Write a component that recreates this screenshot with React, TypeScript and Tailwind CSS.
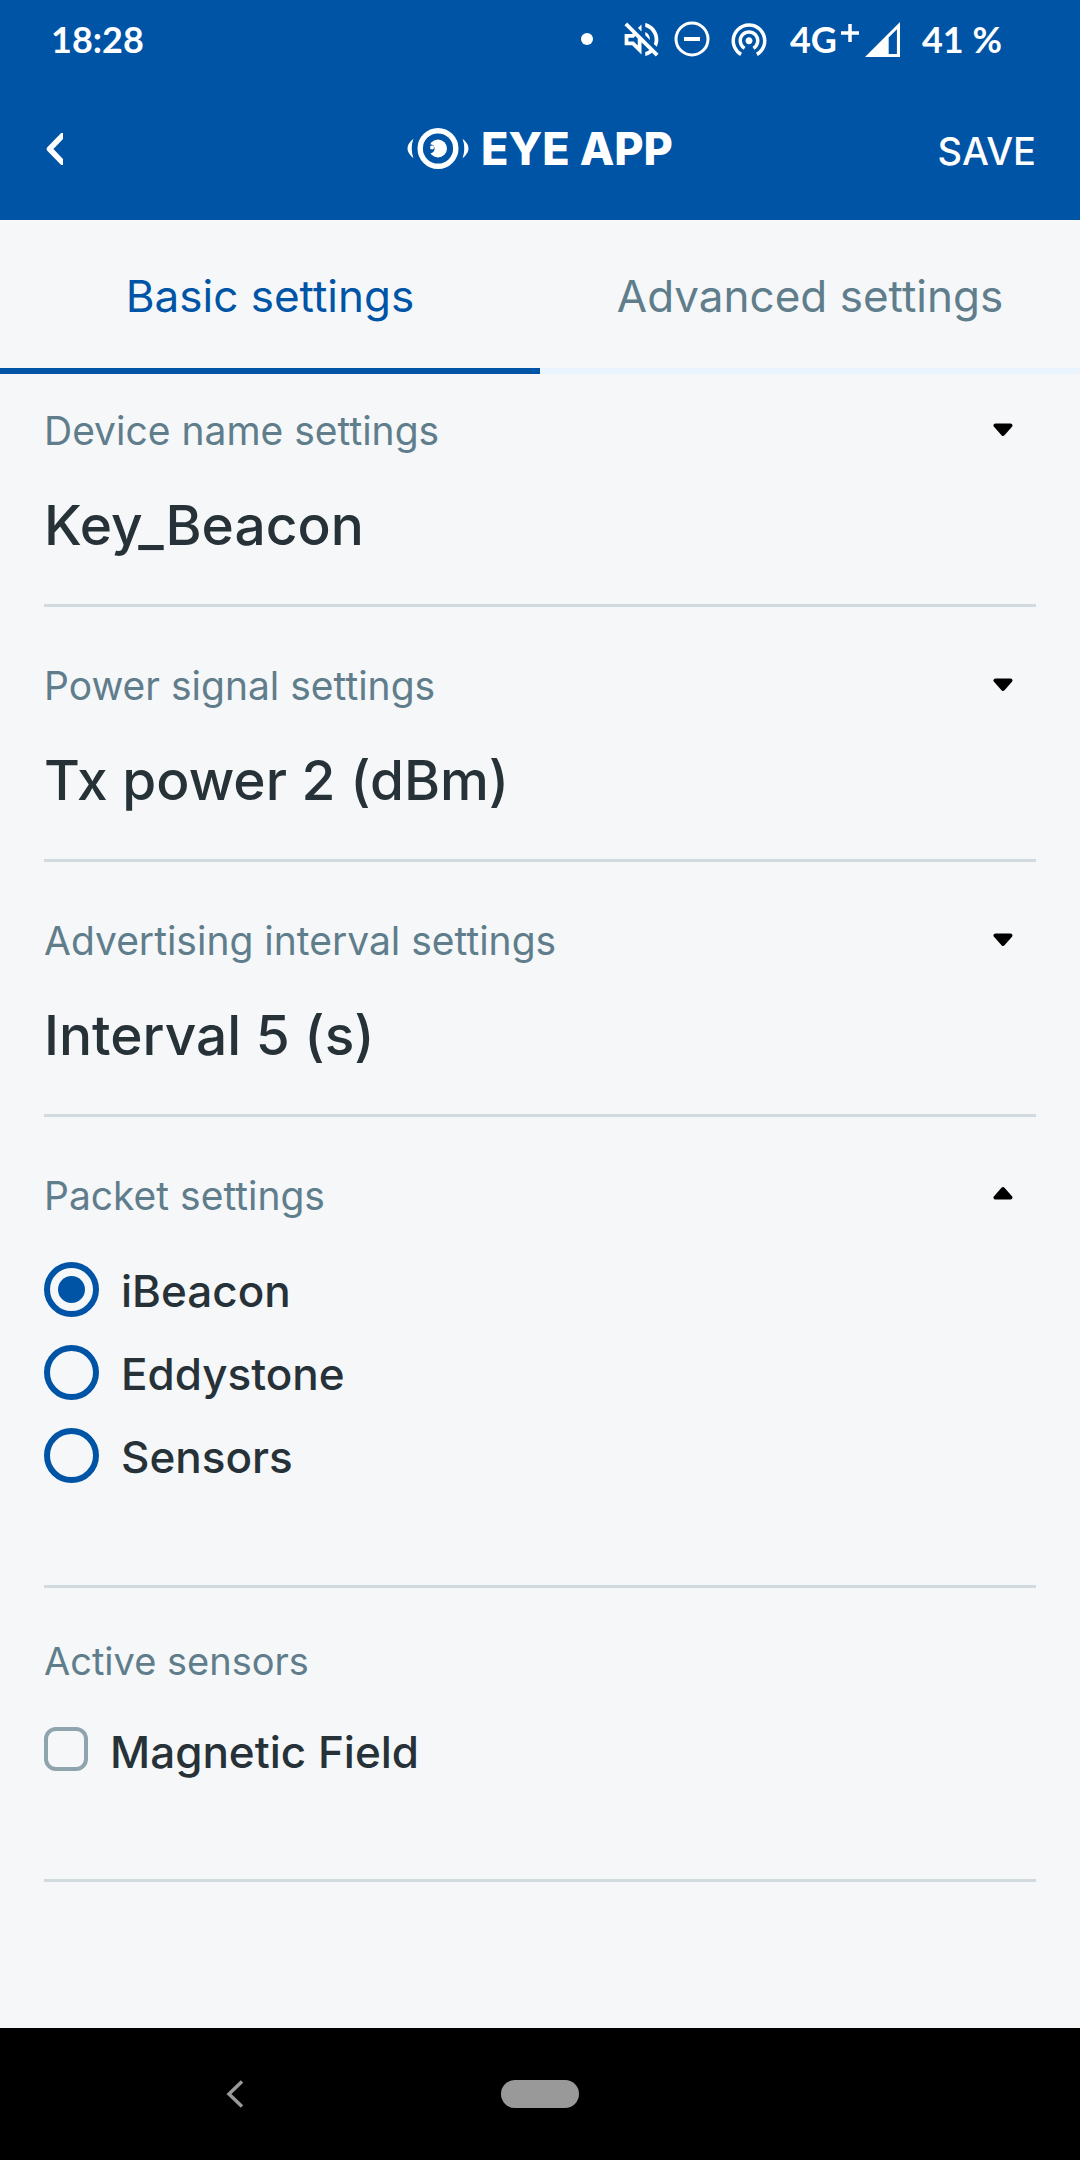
import React, { useState } from 'react';
import { MdOutlineVolumeOff, MdWifiTethering } from 'react-icons/md';

const tabs = ['Basic settings', 'Advanced settings'];

const settings = [
  { label: 'Device name settings', value: 'Key_Beacon' },
  { label: 'Power signal settings', value: 'Tx power 2 (dBm)' },
  { label: 'Advertising interval settings', value: 'Interval 5 (s)' },
];

const packets = ['iBeacon', 'Eddystone', 'Sensors'];

const Caret: React.FC<{ up?: boolean }> = ({ up }) => (
  <svg width="20" height="20" viewBox="0 0 20 20" aria-hidden="true">
    <path
      d={up ? 'M2.5 11.5h15L10 3z' : 'M2.5 4.5h15L10 13z'}
      fill="black"
      stroke="black"
      strokeWidth="4"
      strokeLinejoin="round"
    />
  </svg>
);

const StatusBar: React.FC = () => (
  <div className="flex h-[78px] items-center justify-between pl-[51px] pr-[78px] font-['Lato',sans-serif] text-[36px] font-bold leading-[44px]">
    <span>18:28</span>
    <div className="flex items-center">
      <span className="mr-[26px] h-3 w-3 rounded-full bg-white" />
      <MdOutlineVolumeOff className="mr-[10px] h-[45px] w-[45px]" />
      <svg width="36" height="36" viewBox="0 0 36 36" fill="none" stroke="white" strokeWidth="3" className="mr-[18px]">
        <circle cx="18" cy="18" r="16" />
        <path d="M10 18h16" strokeWidth="4" />
      </svg>
      <MdWifiTethering className="mr-5 h-[42px] w-[42px]" />
      <span>4G</span>
      <svg width="18" height="18" viewBox="0 0 18 18" stroke="white" strokeWidth="3.5" className="mb-3 ml-1 mr-1.5">
        <path d="M9 0v18M0 9h18" />
      </svg>
      <svg width="35" height="35" viewBox="0 0 34 34" className="mr-[22px]">
        <path d="M0 34L34 0v34z" fill="white" />
        <path d="M23 15l8-8v24h-8z" fill="#0054a6" />
      </svg>
      <span>41 %</span>
    </div>
  </div>
);

const Logo: React.FC = () => (
  <div className="flex items-center gap-3">
    <svg width="62" height="42" viewBox="0 0 62 42" aria-hidden="true">
      <circle cx="31" cy="20.5" r="17.8" fill="none" stroke="white" strokeWidth="5.4" />
      <circle cx="31" cy="20.5" r="9" fill="white" />
      <circle cx="23" cy="20.8" r="4.6" fill="#0054a6" />
      <circle cx="25" cy="19.4" r="2" fill="white" />
      <path d="M6.4 10.8Q-5.4 20.5 6.4 30.2Q3 20.5 6.4 10.8z" fill="white" />
      <path d="M55.6 10.8Q67.4 20.5 55.6 30.2Q59 20.5 55.6 10.8z" fill="white" />
    </svg>
    <h1 className="text-[45px] font-extrabold leading-[50px]">EYE APP</h1>
  </div>
);

const App: React.FC = () => {
  const [activeTab, setActiveTab] = useState(tabs[0]);
  const [packet, setPacket] = useState(packets[0]);
  const [magnetic, setMagnetic] = useState(false);

  return (
    <div className="flex min-h-screen flex-col bg-[#f5f7f9] font-['Inter',sans-serif] text-[#263238]">
      <header className="bg-[#0054a6] text-white">
        <StatusBar />
        <div className="flex h-[142px] items-center px-[44px]">
          <div className="flex flex-1">
            <button type="button" aria-label="Back" className="p-0.5">
              <svg width="17" height="32" viewBox="0 0 17 32" fill="none" stroke="white" strokeWidth="5.5">
                <path d="M18 1L3.5 16L18 31" strokeLinejoin="round" />
              </svg>
            </button>
          </div>
          <Logo />
          <div className="flex flex-1 justify-end">
            <button type="button" className="pt-1 text-[38px] font-medium leading-[44px]">SAVE</button>
          </div>
        </div>
      </header>

      {/* Tabs */}
      <div role="tablist" className="grid grid-cols-2">
        {tabs.map((tab) => (
          <button
            key={tab}
            type="button"
            role="tab"
            aria-selected={tab === activeTab}
            onClick={() => setActiveTab(tab)}
            className={`h-[154px] border-b-[6px] pt-1 text-[44px] leading-[50px] ${
              tab === activeTab ? 'border-[#0054a6] text-[#0054a6]' : 'border-[#e9f4ff] text-[#607d8b]'
            }`}
          >
            {tab}
          </button>
        ))}
      </div>

      <main className="flex flex-1 flex-col px-[44px] pt-[35px]">
        <div className="flex flex-col gap-[57px]">
          {settings.map((item) => (
            <section key={item.label} className="border-b-[3px] border-[#d1dade] pb-[47px]">
              <button type="button" className="flex w-full items-center justify-between pr-[23px] text-[39px] leading-[44px] text-[#607d8b]">
                {item.label}
                <Caret />
              </button>
              <p className="mt-[40px] text-[55px] font-medium leading-[64px]">{item.value}</p>
            </section>
          ))}

          <section className="border-b-[3px] border-[#d1dade] pb-[102px]">
            <button type="button" className="flex w-full items-center justify-between pr-[23px] text-[39px] leading-[44px] text-[#607d8b]">
              Packet settings
              <Caret up />
            </button>
            <div className="mt-[44px] flex flex-col items-start gap-[28px]">
              {packets.map((name) => (
                <label key={name} className="flex items-end gap-[22px] text-[44px] font-medium leading-[52px]">
                  <input
                    type="radio"
                    name="packet"
                    checked={name === packet}
                    onChange={() => setPacket(name)}
                    className="h-[55px] w-[55px] appearance-none rounded-full border-[6px] border-[#0054a6] bg-clip-content p-2 checked:bg-[#0054a6]"
                  />
                  {name}
                </label>
              ))}
            </div>
          </section>
        </div>

        {/* Active sensors */}
        <section className="mt-[51px] border-b-[3px] border-[#d1dade] pb-[102px]">
          <h2 className="text-[38px] leading-[44px] text-[#607d8b]">Active sensors</h2>
          <label className="mt-[44px] flex items-start gap-[22px] text-[44px] font-medium leading-[50px]">
            <input
              type="checkbox"
              checked={magnetic}
              onChange={(e) => setMagnetic(e.target.checked)}
              className="h-[44px] w-[44px] appearance-none rounded-[12px] border-[4px] border-[#90a4ae] checked:bg-[#0054a6]"
            />
            Magnetic Field
          </label>
        </section>
      </main>

      {/* Android navigation */}
      <nav className="flex h-[132px] items-center bg-black">
        <div className="flex flex-1 justify-center">
          <button type="button" aria-label="System back" className="mr-8">
            <svg width="18" height="28" viewBox="0 0 18 28" fill="none" stroke="#999999" strokeWidth="3.5">
              <path d="M16 1.5L3 14L16 26.5" />
            </svg>
          </button>
        </div>
        <button type="button" aria-label="Home" className="h-[28px] w-[78px] rounded-full bg-[#999999]" />
        <div className="flex-1" />
      </nav>
    </div>
  );
};

export default App;
